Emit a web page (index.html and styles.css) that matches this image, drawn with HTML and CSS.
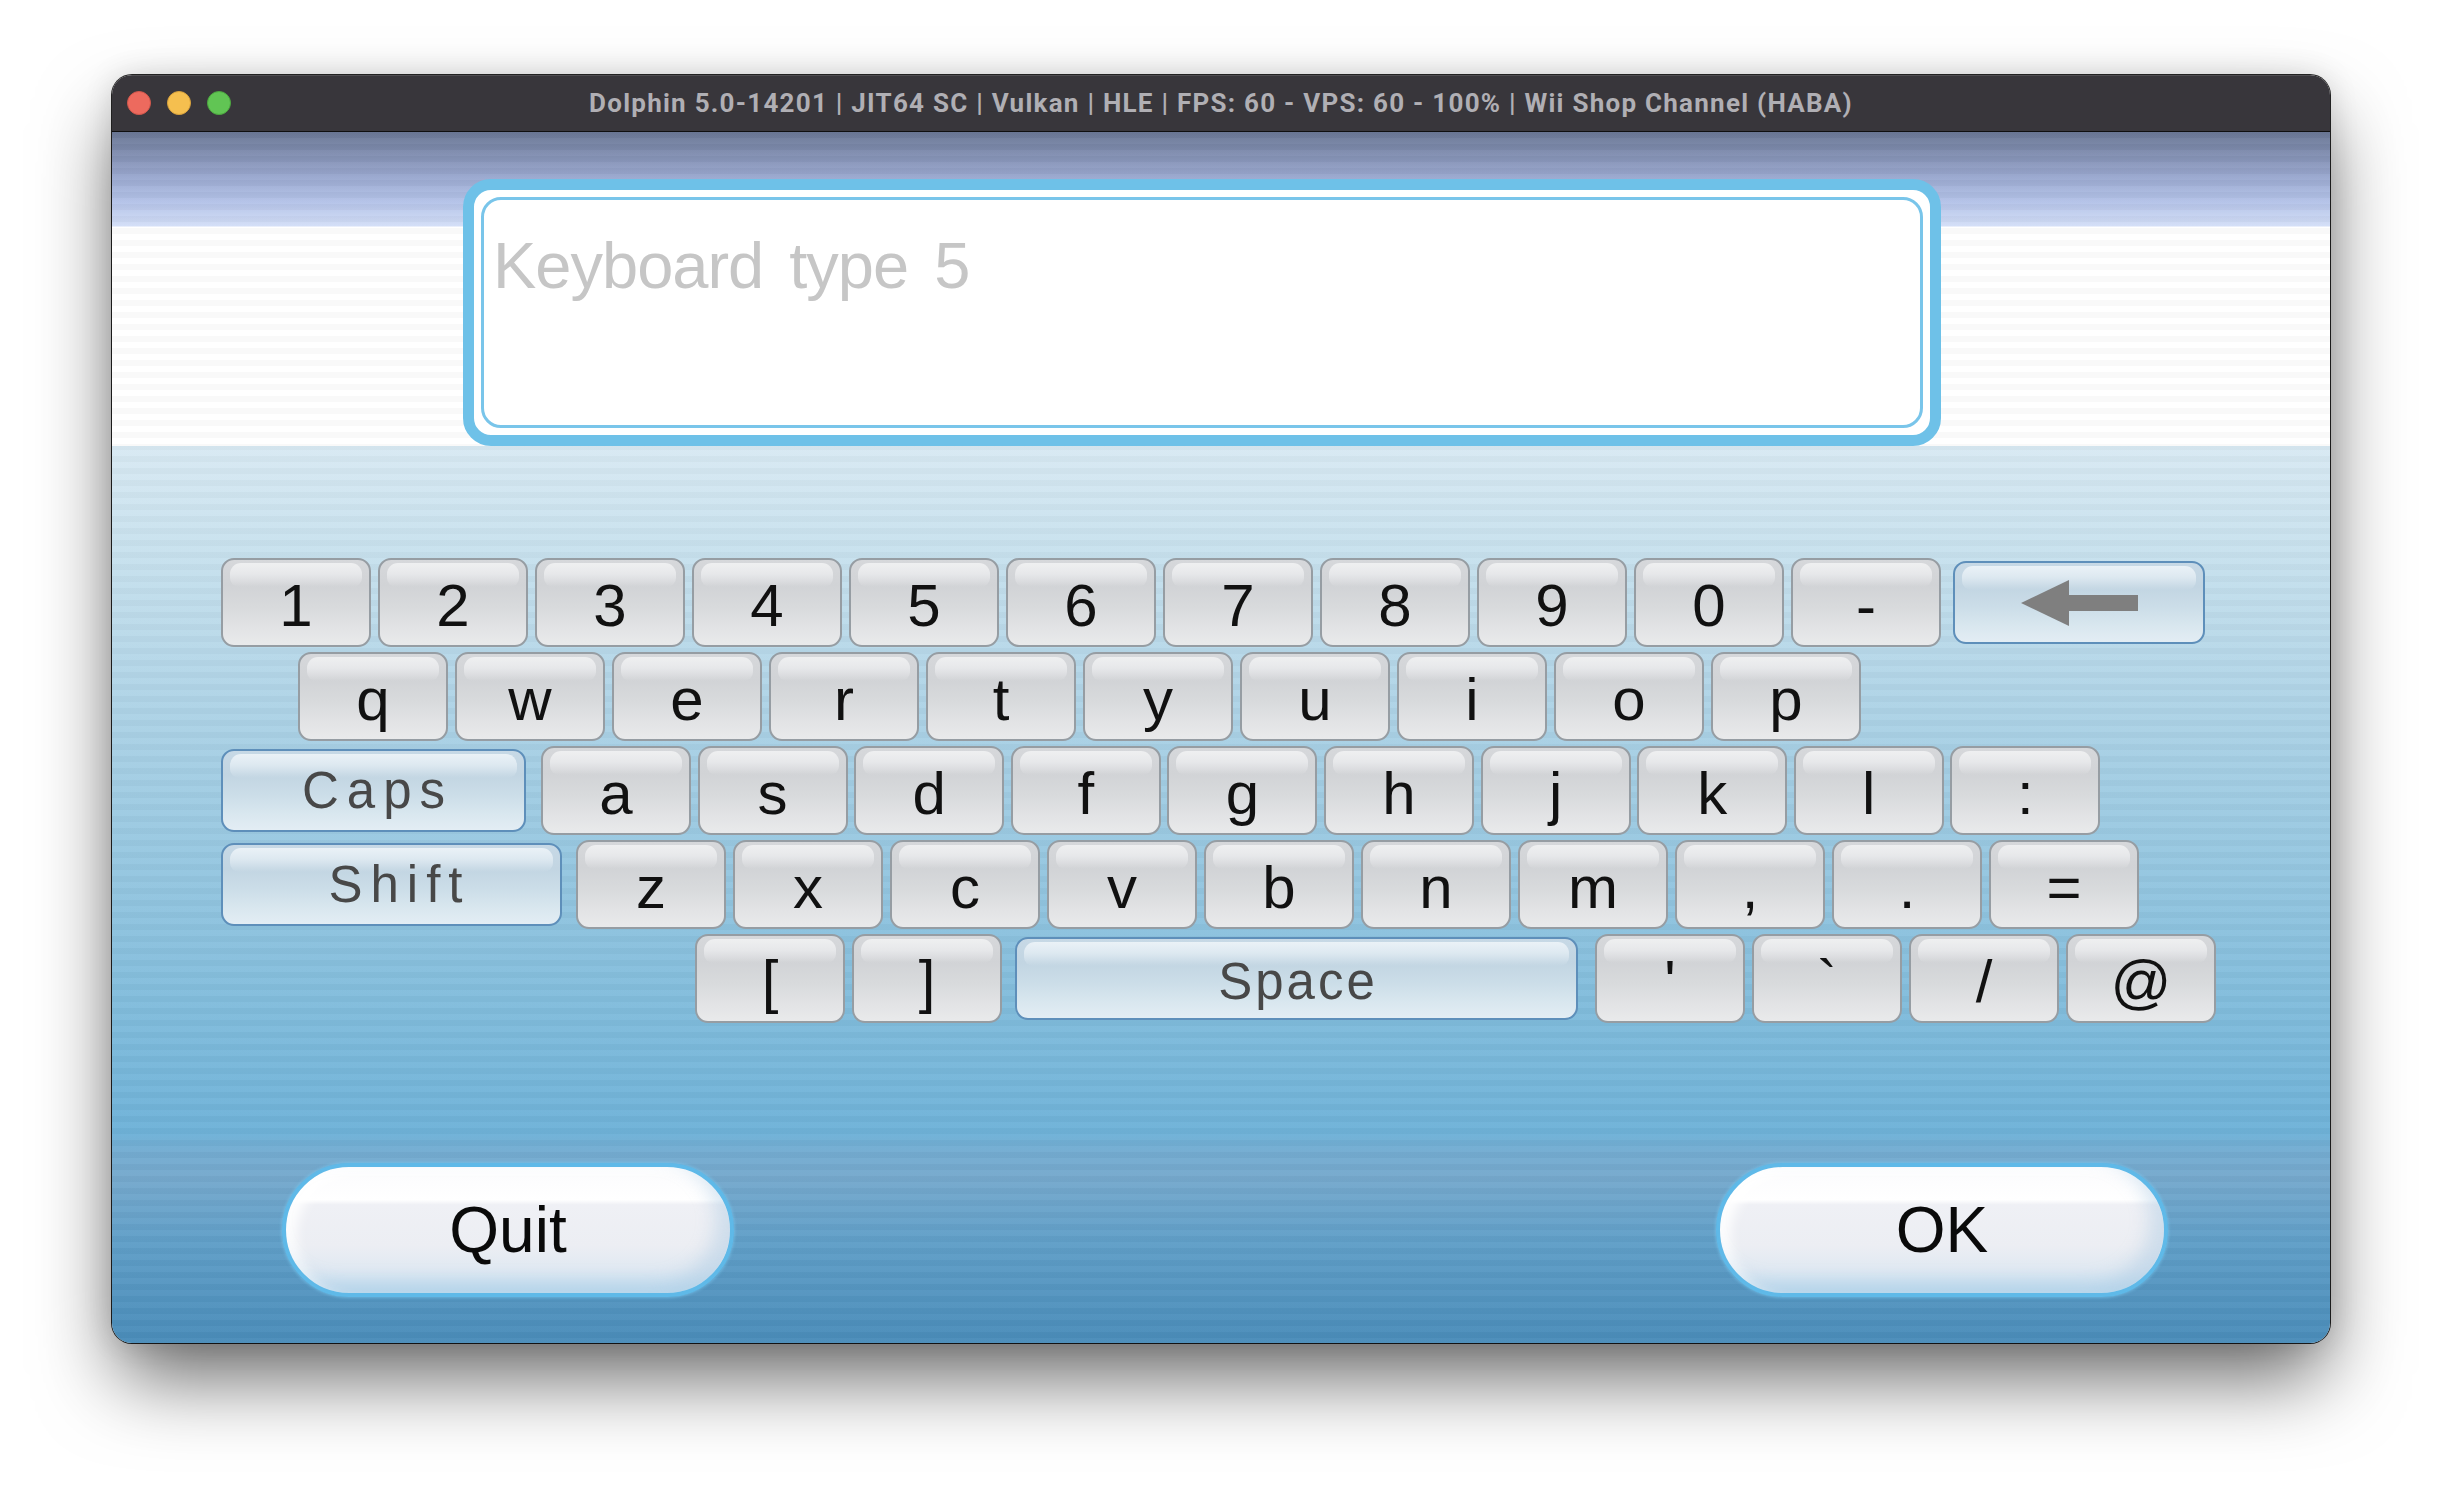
FILE: index.html
```html
<!DOCTYPE html>
<html lang="en">
<head>
<meta charset="utf-8">
<title>Dolphin - Wii Shop Channel</title>
<link rel="stylesheet" href="styles.css">
</head>
<body>
<div class="window">
  <div class="titlebar">
    <div class="lights">
      <span class="light red"></span>
      <span class="light yellow"></span>
      <span class="light green"></span>
    </div>
    <div class="title">Dolphin 5.0-14201 | JIT64 SC | Vulkan | HLE | FPS: 60 - VPS: 60 - 100% | Wii Shop Channel (HABA)</div>
    <div class="spacer"></div>
  </div>
  <div class="game">
    <div class="inputbox">
      <div class="inputinner"><span class="placeholder">Keyboard type 5</span></div>
    </div>

    <div class="keyboard">
      <div class="row row1">
        <div class="key"><span>1</span></div>
        <div class="key"><span>2</span></div>
        <div class="key"><span>3</span></div>
        <div class="key"><span>4</span></div>
        <div class="key"><span>5</span></div>
        <div class="key"><span>6</span></div>
        <div class="key"><span>7</span></div>
        <div class="key"><span>8</span></div>
        <div class="key"><span>9</span></div>
        <div class="key"><span>0</span></div>
        <div class="key"><span>-</span></div>
        <div class="key special backspace">
          <svg class="arrow" width="117" height="46" viewBox="0 0 117 46"><polygon points="0,23 48,0 48,46" fill="#7f7f7f"/><rect x="47" y="15" width="70" height="16" fill="#7f7f7f"/></svg>
        </div>
      </div>
      <div class="row row2">
        <div class="key"><span>q</span></div>
        <div class="key"><span>w</span></div>
        <div class="key"><span>e</span></div>
        <div class="key"><span>r</span></div>
        <div class="key"><span>t</span></div>
        <div class="key"><span>y</span></div>
        <div class="key"><span>u</span></div>
        <div class="key"><span>i</span></div>
        <div class="key"><span>o</span></div>
        <div class="key"><span>p</span></div>
      </div>
      <div class="row row3">
        <div class="key special caps"><span>Caps</span></div>
        <div class="key"><span>a</span></div>
        <div class="key"><span>s</span></div>
        <div class="key"><span>d</span></div>
        <div class="key"><span>f</span></div>
        <div class="key"><span>g</span></div>
        <div class="key"><span>h</span></div>
        <div class="key"><span>j</span></div>
        <div class="key"><span>k</span></div>
        <div class="key"><span>l</span></div>
        <div class="key"><span>:</span></div>
      </div>
      <div class="row row4">
        <div class="key special shift"><span>Shift</span></div>
        <div class="key"><span>z</span></div>
        <div class="key"><span>x</span></div>
        <div class="key"><span>c</span></div>
        <div class="key"><span>v</span></div>
        <div class="key"><span>b</span></div>
        <div class="key"><span>n</span></div>
        <div class="key"><span>m</span></div>
        <div class="key"><span>,</span></div>
        <div class="key"><span>.</span></div>
        <div class="key"><span>=</span></div>
      </div>
      <div class="row row5">
        <div class="key"><span>[</span></div>
        <div class="key"><span>]</span></div>
        <div class="key special space"><span>Space</span></div>
        <div class="key"><span>'</span></div>
        <div class="key"><span>`</span></div>
        <div class="key"><span>/</span></div>
        <div class="key"><span>@</span></div>
      </div>
    </div>

    <div class="footer">
      <div class="pill"><span>Quit</span></div>
      <div class="pill"><span>OK</span></div>
    </div>
  </div>
</div>
</body>
</html>
```

FILE: styles.css
```css
html, body {
  margin: 0;
  padding: 0;
  background: #ffffff;
}

body {
  padding: 75px 112px 0 112px;
  width: 2442px;
  height: 1492px;
  box-sizing: border-box;
  overflow: hidden;
}

.window {
  width: 2218px;
  height: 1268px;
  border-radius: 20px;
  overflow: hidden;
  display: flex;
  flex-direction: column;
  box-shadow: 0 0 0 1px rgba(0, 0, 0, 0.85),
              0 40px 80px -6px rgba(0, 0, 0, 0.6),
              0 0 30px rgba(0, 0, 0, 0.12);
}

/* ---------- title bar ---------- */
.titlebar {
  height: 56px;
  flex: none;
  background: #38363b;
  border-bottom: 1px solid #0f0f10;
  box-shadow: inset 0 1px 0 rgba(255, 255, 255, 0.12);
  display: grid;
  grid-template-columns: 1fr auto 1fr;
  align-items: center;
}

.lights {
  display: flex;
  gap: 16px;
  padding-left: 15px;
}

.light {
  width: 24px;
  height: 24px;
  border-radius: 50%;
  box-sizing: border-box;
}
.light.red { background: #ed6a5e; border: 1px solid #d1574c; }
.light.yellow { background: #f5bf4f; border: 1px solid #d8a23c; }
.light.green { background: #61c554; border: 1px solid #4ca73f; }

.title {
  font-family: Roboto, "Liberation Sans", Arial, sans-serif;
  font-weight: 700;
  font-size: 26px;
  letter-spacing: 1.25px;
  color: #b0afb4;
  white-space: nowrap;
}

/* ---------- game area ---------- */
.game {
  flex: 1;
  display: flex;
  flex-direction: column;
  padding-top: 47px;
  background:
    repeating-linear-gradient(to bottom,
      rgba(0, 0, 0, 0.025) 0px, rgba(0, 0, 0, 0.025) 6px,
      rgba(255, 255, 255, 0.025) 6px, rgba(255, 255, 255, 0.025) 12px),
    linear-gradient(to bottom,
      #6b7896 0px, #7f8cae 20px, #9aa8cf 45px, #b4c3e8 70px, #d3def7 94px,
      #ffffff 95px, #ffffff 314px,
      #d8e9f3 314px, #c8e1ee 420px, #aad1e5 600px, #8cc2de 800px,
      #6fb2d8 1000px, #74acd1 1020px, #76a9cd 1045px, #609fc8 1110px, #4a8cb9 1211px);
}

/* ---------- input box ---------- */
.inputbox {
  margin-left: 351px;
  width: 1478px;
  height: 267px;
  box-sizing: border-box;
  border: 11px solid #6ec1e8;
  border-radius: 28px;
  background: #ffffff;
  padding: 7px;
}

.inputinner {
  height: 100%;
  box-sizing: border-box;
  border: 3px solid #79c5ea;
  border-radius: 20px;
  padding: 33px 0 0 9px;
}

.placeholder {
  font-family: "Liberation Sans", Arial, sans-serif;
  font-size: 65px;
  line-height: 65px;
  letter-spacing: -1px;
  word-spacing: 9px;
  color: #c6c6c6;
}

/* ---------- keyboard ---------- */
.keyboard {
  margin-top: 112px;
  display: flex;
  flex-direction: column;
  gap: 5px;
}

.row {
  height: 89px;
  display: flex;
  align-items: center;
  gap: 7px;
}

.row1 { padding-left: 109px; }
.row2 { padding-left: 186px; }
.row3 { padding-left: 109px; gap: 6.6px; }
.row4 { padding-left: 109px; }
.row5 { padding-left: 583px; }

.key {
  position: relative;
  flex: none;
  box-sizing: border-box;
  width: 150px;
  height: 89px;
  border: 2px solid #969da3;
  border-radius: 13px;
  background: linear-gradient(to bottom,
    #d6d8db 0%, #d1d3d6 30%, #d8dadc 55%, #e2e3e5 80%, #e9eaeb 100%);
  display: flex;
  align-items: center;
  justify-content: center;
  padding-top: 6px;
  font-family: "Liberation Sans", Arial, sans-serif;
  font-size: 60px;
  line-height: 60px;
  color: #111111;
}

.key::before {
  content: "";
  position: absolute;
  left: 7px;
  right: 7px;
  top: 3px;
  height: 24px;
  border-radius: 11px 11px 9px 9px;
  background: linear-gradient(to bottom,
    rgba(240, 241, 242, 0.95) 0%, rgba(233, 234, 236, 0.9) 45%, rgba(214, 216, 219, 0) 100%);
}

.key span {
  position: relative;
}

.key.special {
  height: 83px;
  padding-top: 0;
  border-color: #5e8fba;
  background: linear-gradient(to bottom,
    #c7d9e6 0%, #c2d5e2 30%, #cbdde8 55%, #d9e7ef 80%, #e3edf4 100%);
  font-size: 51px;
  line-height: 51px;
  color: #484848;
}

.key.special::before {
  background: linear-gradient(to bottom,
    rgba(236, 243, 248, 0.95) 0%, rgba(226, 236, 243, 0.85) 45%, rgba(200, 216, 228, 0) 100%);
}

.caps {
  width: 305px;
  margin-right: 8.4px;
  letter-spacing: 8px;
}
.caps span { margin-right: -8px; }

.shift {
  width: 341px;
  margin-right: 7px;
  letter-spacing: 8px;
}
.shift span { margin-right: -8px; left: 4px; }

.space {
  width: 563px;
  margin-left: 6px;
  margin-right: 10px;
  letter-spacing: 3px;
}
.key.space { padding-top: 6px; }
.space span { margin-right: -3px; }

.backspace {
  width: 252px;
  margin-left: 5px;
}
.arrow {
  position: relative;
  display: block;
}

/* ---------- bottom buttons ---------- */
.footer {
  margin-top: 140px;
  display: flex;
  justify-content: space-between;
  padding: 0 162px 0 170px;
}

.pill {
  width: 452px;
  height: 134px;
  box-sizing: border-box;
  border: 4px solid #5fb9e8;
  border-radius: 67px;
  background: linear-gradient(to bottom,
    #fbfbfd 0%, #ffffff 26%, #eff0f5 30%, #eceef3 62%, #e1e9f2 80%, #c3def0 100%);
  box-shadow: 0 0 3px 1px rgba(120, 200, 240, 0.6),
              inset -14px -10px 18px rgba(150, 190, 220, 0.35),
              inset 10px 6px 12px rgba(255, 255, 255, 0.9);
  display: flex;
  align-items: center;
  justify-content: center;
  font-family: "Liberation Sans", Arial, sans-serif;
  font-size: 64px;
  line-height: 64px;
  color: #0a0a0a;
}
```
